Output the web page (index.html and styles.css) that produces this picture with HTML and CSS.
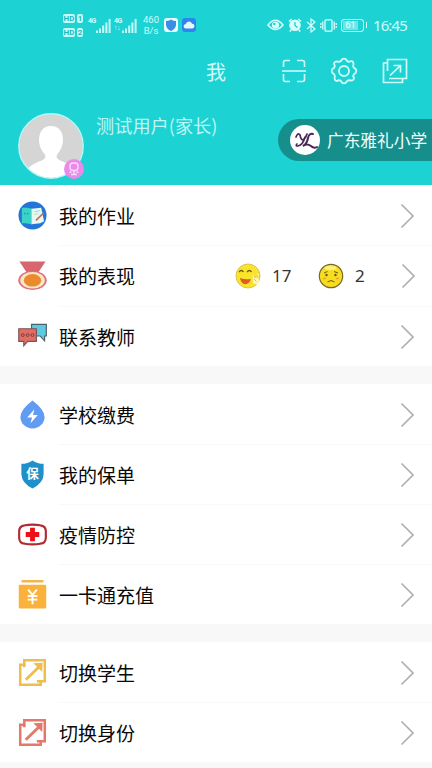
FILE: index.html
```html
<!DOCTYPE html>
<html lang="zh-CN">
<head>
<meta charset="utf-8">
<meta name="viewport" content="width=device-width">
<title>我</title>
<link rel="stylesheet" href="styles.css">
</head>
<body>
<svg class="defs" width="0" height="0">
  <symbol id="chevron" viewBox="0 0 14 26"><path d="M1.500 1.500 13 13 1.500 24.500" fill="none" stroke="#b0b0b0" stroke-width="1.700"/></symbol>
  <symbol id="signal" viewBox="0 0 15 14"><path d="M1 11.500V14M4 9.500V14M7.200 6.500V14M10.400 3.500V14M13.600 0V14" stroke="#c8fbf8" stroke-width="2"/></symbol>
  <symbol id="switch" viewBox="0 0 30 30"><g fill="none" stroke="currentColor" stroke-width="2.600"><path d="M6.500 9.500V2.300H27.700V24H19.500M8 7H2.300V27.700H23.500V23.500"/><path d="M8 22.500 23 8" stroke-width="3"/></g><path d="M16 5.500 25.500 5 25 14.500Z" fill="currentColor"/></symbol>
</svg>
<header class="header">
  <div class="status">
    <div class="hd">
      <div class="hd-row"><span class="hd-tag">HD</span><span class="hd-num">1</span></div>
      <div class="hd-row"><span class="hd-tag">HD</span><span class="hd-num">2</span></div>
    </div>
    <div class="cell"><span class="net">4G</span><svg class="bars" width="15" height="14"><use href="#signal"/></svg></div>
    <div class="cell cell-two"><span class="net">4G<br>↑↓</span><svg class="bars" width="15" height="14"><use href="#signal"/></svg></div>
    <div class="speed">460<br>B/s</div>
    <svg class="app" width="14" height="14" viewBox="0 0 14 14"><rect width="14" height="14" rx="3" fill="#eafcff"/><path d="M7 1.500Q9.500 3 12 3V7Q11.500 11 7 13Q2.500 11 2 7V3Q4.500 3 7 1.500Z" fill="#3a8de4"/></svg>
    <svg class="app" width="14" height="14" viewBox="0 0 14 14"><rect width="14" height="14" rx="3" fill="#2b87ed"/><path d="M4 10.500a2.300 2.300 0 0 1-.2-4.600 3.200 3.200 0 0 1 6.200-.2 2.400 2.400 0 0 1 .2 4.800Z" fill="#e9f8ff"/></svg>
    <div class="status-right">
      <svg width="17" height="12" viewBox="0 0 17 12" fill="none" stroke="#d6fffd" stroke-width="1.500"><path d="M1 6Q8.500-3.500 16 6Q8.500 15 1 6Z"/><circle cx="8.500" cy="6" r="3.600" fill="#d6fffd" stroke="none"/><circle cx="7.300" cy="4.900" r="1.200" fill="#1dd2d3" stroke="none"/></svg>
      <svg width="14" height="14" viewBox="0 0 14 14"><circle cx="7" cy="7.300" r="5.800" fill="#d6fffd"/><path d="M1 3.500 3.700 1M13 3.500 10.300 1M3 12 1.800 13.500M11 12 12.200 13.500" stroke="#d6fffd" stroke-width="1.700"/><path d="M7 4V7.500L9.500 9.500" fill="none" stroke="#1dc4c8" stroke-width="1.200"/></svg>
      <svg width="10" height="15" viewBox="0 0 10 15" fill="none" stroke="#d6fffd" stroke-width="1.200"><path d="M1 4 9 11 5 14V1L9 4 1 11"/></svg>
      <svg width="17" height="13" viewBox="0 0 17 13" fill="none" stroke="#d6fffd" stroke-width="1.300"><rect x="5" y=".8" width="7" height="11.400" rx="1"/><path d="M2.800 2.500V10.500M14.200 2.500V10.500"/><path d="M.8 4V9M16.200 4V9" stroke-dasharray="2 1"/></svg>
      <div class="battery"><span class="battery-level">61</span></div>
      <span class="clock">16:45</span>
    </div>
  </div>
  <div class="titlebar">
    <h1 class="title">我</h1>
    <div class="actions">
      <svg width="24" height="24" viewBox="0 0 24 24" fill="none" stroke="#d2fcfa" stroke-width="1.600"><path d="M1.500 8V3.500Q1.500 1.500 3.500 1.500H8M15 1.500H20.500Q22.500 1.500 22.500 3.500V8M22.500 15V20.500Q22.500 22.500 20.500 22.500H15M8 22.500H3.500Q1.500 22.500 1.500 20.500V15M0 12H24"/></svg>
      <svg width="28" height="28" viewBox="-14 -14 28 28" fill="none" stroke="#d2fcfa" stroke-width="1.800" stroke-linejoin="round"><path d="M-2.400-11Q-2-12.300 0-12.300T2.400-11L3.200-9.900 5-9.100Q8-10.800 9-9T9.100-5L9.900-3.200 11-2.400Q12.300-2 12.300 0T11 2.400L9.900 3.200 9.100 5Q10.800 8 9 9T5 9.100L3.200 9.900 2.400 11Q2 12.300 0 12.300T-2.400 11L-3.200 9.900-5 9.100Q-8 10.800-9 9T-9.100 5L-9.900 3.200-11 2.400Q-12.300 2-12.300 0T-11-2.400L-9.900-3.200-9.100-5Q-10.800-8-9-9T-5-9.100L-3.200-9.900Z"/><circle r="5"/></svg>
      <svg width="26" height="26" viewBox="0 0 26 26" fill="none" stroke="#d2fcfa" stroke-width="1.700"><path d="M5.500 13V1.500H24.500V20.500H7M5.500 5H1.500V24.500H20.500V20.500M8 17.500 18 8M11.500 7.500H18.500V14.500"/></svg>
    </div>
  </div>
  <div class="profile">
    <div class="avatar">
      <svg width="66" height="66" viewBox="0 0 66 66"><defs><clipPath id="face"><circle cx="33" cy="33" r="32"/></clipPath></defs><circle cx="33" cy="33" r="32" fill="#d5d5d5"/><path clip-path="url(#face)" d="M33 13C25 13 21 19 21 27C21 33 24 38 26.500 41C29 45 26 47 20 49Q12 52 8 58V66H58V58Q54 52 46 49C40 47 37 45 39.500 41C42 38 45 33 45 27C45 19 41 13 33 13Z" fill="#fff"/><circle cx="33" cy="33" r="32.200" fill="none" stroke="#bdf6f7" stroke-width="1.400"/></svg>
      <svg class="badge" width="20" height="20" viewBox="0 0 20 20"><circle cx="10" cy="10" r="10" fill="#e98be9"/><g fill="none" stroke="#fbd9fb" stroke-width="1.400"><rect x="6" y="4" width="8" height="7.500" rx="3"/><path d="M10 11.500V15.500M5.500 13.300H7.500M12.500 13.300H14.500M7 15.500H13"/></g></svg>
    </div>
    <div class="name">测试用户(家长)</div>
    <div class="school">
      <svg width="30" height="30" viewBox="0 0 30 30"><circle cx="15" cy="15" r="15" fill="#fff"/><g fill="none" stroke="#49265c" stroke-linecap="round"><path d="M6 12Q8 7 10 10Q11 15 13 15Q16 13 17 9M15 12Q13 20 8 21Q5 21 7 19" stroke-width="1.700"/><path d="M23 9Q19 8 18 13Q17 19 13 21Q17 18 21 21Q24 24 27 22" stroke-width="2"/></g></svg>
      <span>广东雅礼小学</span>
    </div>
  </div>
</header>
<main>
  <section class="group group-first">
    <div class="row">
      <svg class="icon" viewBox="0 0 30 30"><circle cx="15" cy="15" r="14.500" fill="#2376d8"/><path d="M4 7H10L14 8V24L8 23H4Z" fill="#3bd3c5"/><path d="M14 8 24 7 27 21 23 23 14 24Z" fill="#e9f8f3"/><path d="M14 8V24M17 11 23 10M17 14 21 13" stroke="#8fdccf"/><path d="M18.500 20 27 12" stroke="#b77454" stroke-width="1.600"/><path d="M7 12v2M10 12v2" stroke="#237fc2"/></svg>
      <span class="label">我的作业</span><svg class="chevron"><use href="#chevron"/></svg>
    </div>
    <div class="row row-tall">
      <svg class="icon" viewBox="0 0 30 30"><path d="M1.500 .5H28.500L21 12H9Z" fill="#d9656f"/><ellipse cx="15" cy="20" rx="14.700" ry="10" fill="#d9727a"/><ellipse cx="15" cy="20" rx="12.700" ry="8.500" fill="#fbe6ca"/><ellipse cx="15" cy="20" rx="9" ry="6.500" fill="#e98a2c"/></svg>
      <span class="label">我的表现</span>
      <div class="scores">
        <svg width="26" height="26" viewBox="0 0 26 26"><circle cx="13" cy="13" r="12" fill="#fbe32b" stroke="#d8c64a"/><path d="M4 9Q6.500 6 8.500 9M12 9Q14.500 6 16.500 9" fill="none" stroke="#6d5c18" stroke-width="1.300"/><path d="M5 15Q10 17 16 16Q14 22 9 21Q6 20 5 15Z" fill="#dc5d21"/><path d="M18 12 20 16M23 11 22 16M18.500 16Q21 14 23.500 17L22 20.500 19 19.500Z" fill="#fff8c2" stroke="#fff4bd" stroke-width="1.800"/><path d="M19 16 21.500 18.500M19 12.500 20.500 15M22.500 12 22 15" stroke="#b3a75d" stroke-width=".7"/></svg>
        <span class="score">17</span>
        <svg width="26" height="26" viewBox="0 0 26 26"><circle cx="13" cy="13" r="11.700" fill="#f7dc20" stroke="#766a25" stroke-width="1.200"/><ellipse cx="12.500" cy="5" rx="6" ry="2.200" fill="#fff27b"/><path d="M6 10 9.500 8.500M16 8.500 20 10M9.500 19Q13 16 16.500 19" fill="none" stroke="#705b11" stroke-width="1"/><circle cx="8.500" cy="12" r="1.200" fill="#645519"/><circle cx="17.500" cy="12" r="1.200" fill="#645519"/><path d="M5 15.500H8M18 15.500H21" stroke="#f2a132" stroke-width="1.500"/></svg>
        <span class="score">2</span>
      </div>
      <svg class="chevron"><use href="#chevron"/></svg>
    </div>
    <div class="row">
      <svg class="icon" viewBox="0 0 30 30"><path d="M14 2.500H29.300V14.500H27.500V19.500L23 14.500H14Z" fill="#60c9e2" stroke="#49616b" stroke-width="1.200"/><path d="M.8 7H19V20H10L6 24.500V20H.8Z" fill="#e46d62" stroke="#76545a" stroke-width="1.200"/><g fill="none" stroke="#6e414a"><circle cx="5" cy="13.500" r="1.500"/><circle cx="10" cy="13.500" r="1.500"/><circle cx="15" cy="13.500" r="1.500"/></g></svg>
      <span class="label">联系教师</span><svg class="chevron"><use href="#chevron"/></svg>
    </div>
  </section>
  <section class="group">
    <div class="row">
      <svg class="icon" viewBox="0 0 30 30"><path d="M15 .5Q27.500 10 27.500 17.500A12.500 12 0 0 1 2.500 17.500Q2.500 10 15 .5Z" fill="#5f9cf2"/><path d="M17 9.500 9.500 18H14.500L13 24 20.500 15.500H15.500Z" fill="#fff"/></svg>
      <span class="label">学校缴费</span><svg class="chevron"><use href="#chevron"/></svg>
    </div>
    <div class="row">
      <svg class="icon" viewBox="0 0 30 30"><path d="M15 .5Q20 4 26.500 4V15Q26 24 15 29.500Q4 24 3.500 15V4Q10 4 15 .5Z" fill="#2090cb"/><text x="15" y="19" text-anchor="middle" class="shield-text">保</text></svg>
      <span class="label">我的保单</span><svg class="chevron"><use href="#chevron"/></svg>
    </div>
    <div class="row">
      <svg class="icon" viewBox="0 0 30 30"><path d="M7 5.500Q15 4.200 23 5.500Q28.800 6 28.800 12V18Q28.800 24 23 24.500Q15 25.800 7 24.500Q1.200 24 1.200 18V12Q1.200 6 7 5.500Z" fill="#fff" stroke="#b02b30" stroke-width="2.200"/><path d="M15 8V22M8 15H22" stroke="#ed1018" stroke-width="5"/></svg>
      <span class="label">疫情防控</span><svg class="chevron"><use href="#chevron"/></svg>
    </div>
    <div class="row">
      <svg class="icon" viewBox="0 0 30 30"><rect x="3.500" y="0" width="23" height="2.600" rx="1" fill="#efb653"/><rect x=".8" y="4.800" width="28.400" height="24.800" rx="1.500" fill="#fbb23c"/><path d="M10.500 10 15 15.500 19.500 10M15 15.500V25M10 16.500H20M10 20.300H20" fill="none" stroke="#fff" stroke-width="2"/></svg>
      <span class="label">一卡通充值</span><svg class="chevron"><use href="#chevron"/></svg>
    </div>
  </section>
  <section class="group">
    <div class="row">
      <svg class="icon icon-yellow"><use href="#switch"/></svg>
      <span class="label">切换学生</span><svg class="chevron"><use href="#chevron"/></svg>
    </div>
    <div class="row">
      <svg class="icon icon-red"><use href="#switch"/></svg>
      <span class="label">切换身份</span><svg class="chevron"><use href="#chevron"/></svg>
    </div>
  </section>
</main>
</body>
</html>
```
FILE: styles.css
```css
* { box-sizing: border-box; }
body {
  margin: 0;
  width: 432px;
  height: 768px;
  overflow: hidden;
  background: #f8f8f8;
  color: #080808;
  font-family: "Noto Sans CJK SC", sans-serif;
}
svg { display: block; flex: none; }
.defs { position: absolute; }
.header { height: 185px; background: #1dd2d3; color: #d2fcfa; }
.status { display: flex; align-items: center; height: 50px; padding: 0 24px 0 63px; font-family: Roboto, sans-serif; }
.hd { display: flex; flex-direction: column; gap: 5px; width: 21px; }
.hd-row { display: flex; gap: 2px; }
.hd-tag, .hd-num { height: 9px; border-radius: 2px; background: #c8fbf8; color: #16b9bd; font-size: 8px; font-weight: 700; line-height: 9px; text-align: center; }
.hd-tag { width: 12px; }
.hd-num { width: 6px; }
.cell { display: flex; margin-left: 4px; width: 23px; }
.cell-two { margin-left: 3px; width: 25px; }
.net { width: 8px; height: 15px; font-size: 7px; line-height: 7px; font-weight: 700; letter-spacing: -.6px; white-space: nowrap; }
.bars { margin-top: 1px; }
.speed { margin-left: 3px; width: 18px; font-size: 9.500px; line-height: 11px; text-align: center; }
.app { margin-left: 4px; }
.status-right { display: flex; align-items: center; margin-left: auto; gap: 4px; }
.battery { position: relative; width: 23px; height: 13px; padding: 1px; border: 1.500px solid #d6fffd; border-radius: 3px; }
.battery::after { content: ""; position: absolute; right: -4px; top: 2px; width: 1.500px; height: 6px; background: #d6fffd; }
.battery-level { display: block; width: 15px; height: 9px; background: #72e5e3; color: #efffff; font-size: 9px; line-height: 9px; text-align: center; }
.clock { margin-left: 5px; font-family: "Noto Sans", sans-serif; font-size: 15px; line-height: 18px; width: 35px; letter-spacing: -.9px; white-space: nowrap; }
.titlebar { display: flex; height: 42px; align-items: center; padding: 0 24px 0 206px; }
.title { margin: 2px 0 0; font-size: 20px; line-height: 24px; font-weight: 400; }
.actions { display: flex; align-items: center; gap: 24px; margin-left: auto; }
.profile { display: flex; height: 93px; padding-left: 18px; }
.avatar { position: relative; width: 66px; height: 66px; margin-top: 21px; }
.badge { position: absolute; right: 0; bottom: 0; }
.name { margin: 21px 0 0 12px; color: #bff6f5; font-size: 18.200px; line-height: 24px; font-weight: 400; white-space: nowrap; }
.school { display: flex; align-items: center; gap: 7px; width: 154px; height: 42px; margin: 27px 0 0 auto; padding-left: 12px; border-radius: 21px 0 0 21px; background: #168f8c; color: #f2ffff; font-size: 16.700px; line-height: 24px; white-space: nowrap; }
.group { margin-bottom: 18px; background: #fff; }
.row { display: flex; align-items: center; height: 60px; padding: 1px 18px 0; position: relative; }
.row-tall { height: 61px; padding-top: 0; }
.row + .row::before { content: ""; position: absolute; left: 58px; right: 0; top: 0; height: 1px; background: #f9f9f9; }
.icon { width: 29px; height: 29px; }
.label { margin-left: 12px; padding-top: 1px; font-size: 19px; line-height: 28px; }
.row-tall .label { padding-top: 0; }
.chevron { width: 14px; height: 26px; margin-left: auto; }
.scores { display: flex; align-items: center; margin-left: 100px; color: #333; font-family: "Noto Sans", sans-serif; font-size: 17px; }
.score { width: 34px; margin-left: 11px; line-height: 24px; }
.scores .score + svg { margin-left: 12px; }
.scores + .chevron { margin-right: -1px; }
.shield-text { fill: #fff; font-size: 13px; font-weight: 700; }
.icon-yellow { color: #efbd4b; }
.icon-red { color: #e4796b; }
```
